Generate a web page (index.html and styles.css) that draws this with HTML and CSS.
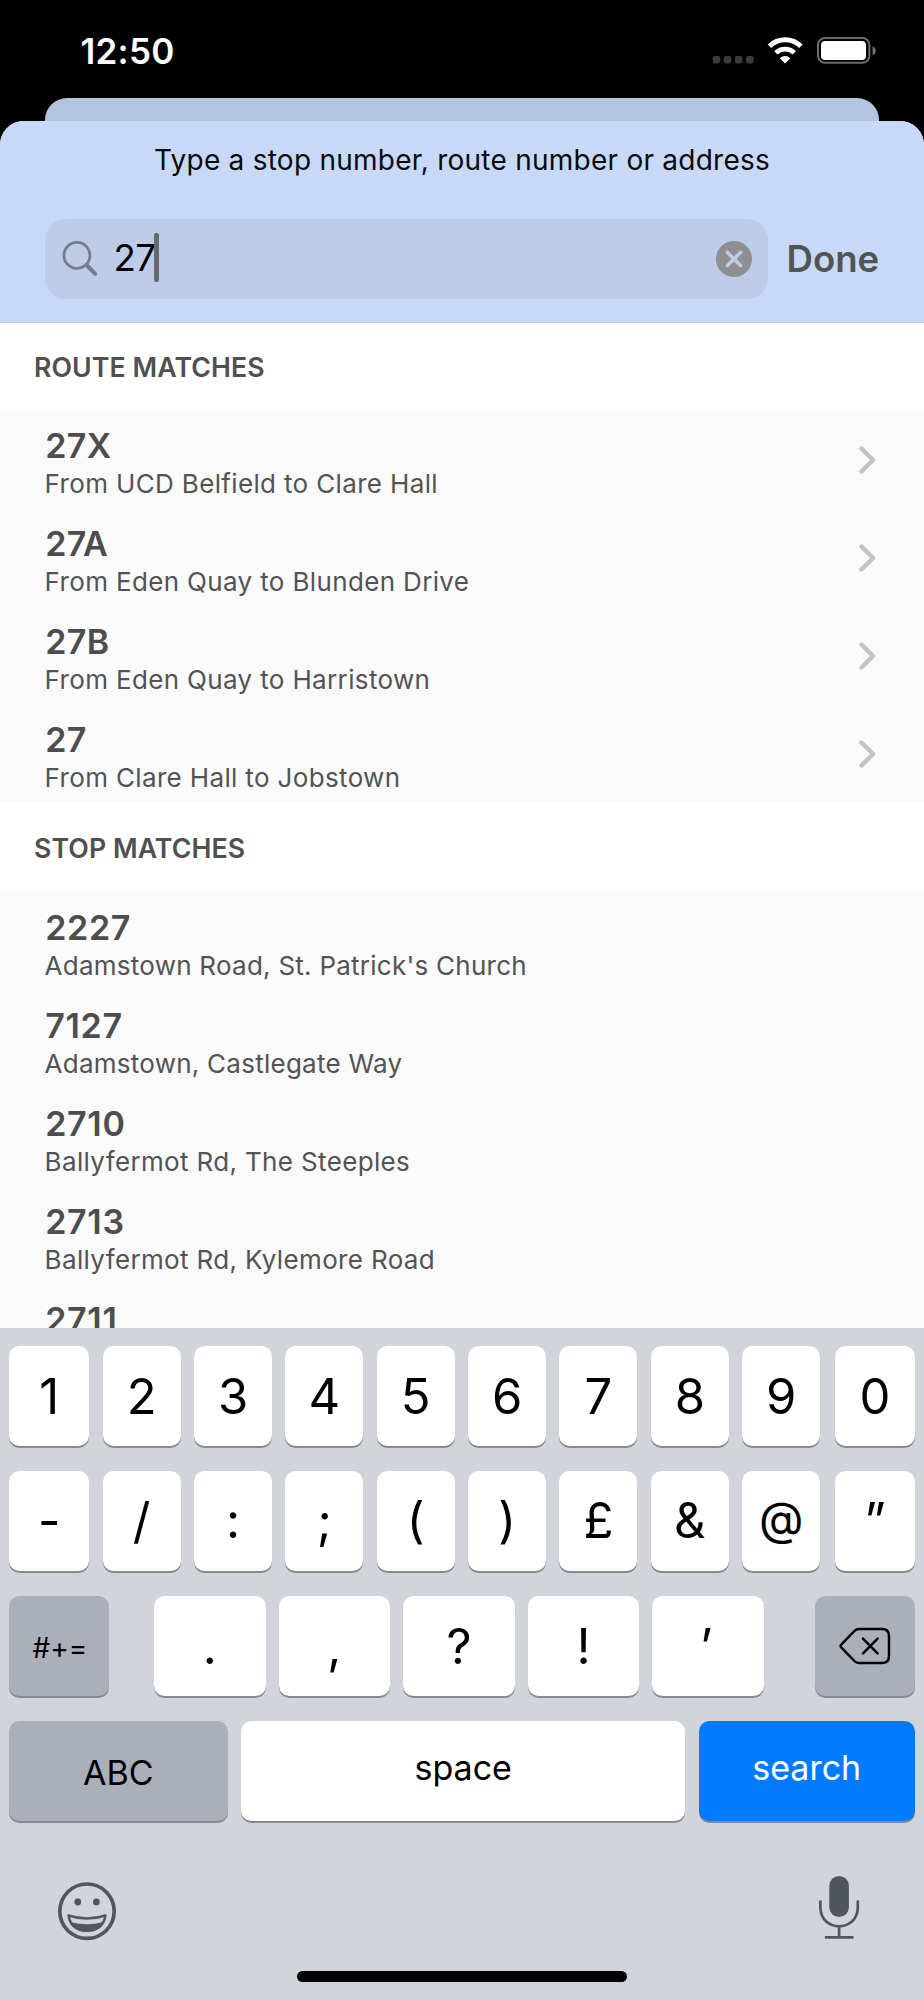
FILE: index.html
```html
<!DOCTYPE html>
<html lang="en">
<head>
<meta charset="utf-8">
<title>Search</title>
<link rel="stylesheet" href="styles.css">
</head>
<body>
<main class="phone">
  <header class="status">
    <span class="time">12:50</span>
    <svg class="status-icons" width="170" height="34" viewBox="706 34 170 34">
      <g fill="#3b3b3b">
        <rect x="712.7" y="56" width="7.6" height="7.4" rx="2.4"/><rect x="723.7" y="56" width="7.6" height="7.4" rx="2.4"/><rect x="734.8" y="56" width="7.6" height="7.4" rx="2.4"/><rect x="746" y="56" width="7.6" height="7.4" rx="2.4"/>
      </g>
      <g fill="none" stroke="#fff" stroke-width="5">
        <path d="M769.4 46.3A22.3 22.3 0 0 1 800.9 46.3"/>
        <path d="M775.9 52.9A13.2 13.2 0 0 1 794.3 52.9" stroke-width="4.8"/>
      </g>
      <path d="M785.1 63.4L779.9 58.2A7.3 7.3 0 0 1 790.3 58.2Z" fill="#fff"/>
      <rect x="818" y="38" width="51.4" height="24.8" rx="7" fill="none" stroke="#6b6b6b" stroke-width="2"/>
      <rect x="821" y="41" width="45" height="19" rx="4" fill="#fff"/>
      <path d="M872.6 46.2C876.6 47.8 876.6 53.6 872.6 55.2Z" fill="#777"/>
    </svg>
  </header>
  <div class="back-card"></div>
  <section class="sheet">
    <div class="search-header">
      <h1 class="prompt">Type a stop number, route number or address</h1>
      <div class="search-row">
        <div class="field">
          <svg width="38" height="38" viewBox="0 0 38 38"><g fill="none" stroke="#777d8b" stroke-linecap="round"><circle cx="15.9" cy="15.4" r="13" stroke-width="2.8"/><path d="M25.5 25L34.3 33.8" stroke-width="4"/></g></svg>
          <span class="query">27</span><span class="caret"></span>
          <svg class="clear" width="36" height="36" viewBox="0 0 36 36"><circle cx="18" cy="18" r="18" fill="#8e8e93"/><path d="M11.4 11.4L24.6 24.6M24.6 11.4L11.4 24.6" stroke="#becce6" stroke-width="3.6" stroke-linecap="round"/></svg>
        </div>
        <span class="done">Done</span>
      </div>
    </div>
    <div class="results">
      <h2 class="section">ROUTE MATCHES</h2>
      <ul class="list">
        <li class="row"><div><b class="num">27X</b><p class="desc">From UCD Belfield to Clare Hall</p></div><svg class="chev" width="18" height="30" viewBox="0 0 18 30"><path d="M3.5 3.5L15 15L3.5 26.5"/></svg></li>
        <li class="row"><div><b class="num">27A</b><p class="desc">From Eden Quay to Blunden Drive</p></div><svg class="chev" width="18" height="30" viewBox="0 0 18 30"><path d="M3.5 3.5L15 15L3.5 26.5"/></svg></li>
        <li class="row"><div><b class="num">27B</b><p class="desc">From Eden Quay to Harristown</p></div><svg class="chev" width="18" height="30" viewBox="0 0 18 30"><path d="M3.5 3.5L15 15L3.5 26.5"/></svg></li>
        <li class="row"><div><b class="num">27</b><p class="desc">From Clare Hall to Jobstown</p></div><svg class="chev" width="18" height="30" viewBox="0 0 18 30"><path d="M3.5 3.5L15 15L3.5 26.5"/></svg></li>
      </ul>
      <h2 class="section">STOP MATCHES</h2>
      <ul class="list stops">
        <li class="row"><div><b class="num">2227</b><p class="desc church">Adamstown Road, St. Patrick's Church</p></div></li>
        <li class="row"><div><b class="num">7127</b><p class="desc castle">Adamstown, Castlegate Way</p></div></li>
        <li class="row"><div><b class="num">2710</b><p class="desc">Ballyfermot Rd, The Steeples</p></div></li>
        <li class="row"><div><b class="num">2713</b><p class="desc">Ballyfermot Rd, Kylemore Road</p></div></li>
        <li class="row"><div><b class="num">2711</b></div></li>
      </ul>
    </div>
  </section>
  <section class="keyboard">
    <div class="keys ten"><span class="key">1</span><span class="key">2</span><span class="key">3</span><span class="key">4</span><span class="key">5</span><span class="key">6</span><span class="key">7</span><span class="key">8</span><span class="key">9</span><span class="key">0</span></div>
    <div class="keys ten sym"><span class="key">-</span><span class="key">/</span><span class="key">:</span><span class="key">;</span><span class="key">(</span><span class="key">)</span><span class="key">£</span><span class="key">&amp;</span><span class="key at">@</span><span class="key">”</span></div>
    <div class="keys third">
      <span class="key dark more">#+=</span>
      <div class="punct"><span class="key">.</span><span class="key">,</span><span class="key">?</span><span class="key">!</span><span class="key apos">’</span></div>
      <span class="key dark"><svg width="54" height="40" viewBox="0 0 54 40"><g fill="none" stroke="#000" stroke-width="2.5" stroke-linecap="round" stroke-linejoin="round"><path d="M3.2 18.6Q2 20 3.2 21.4L16.4 35Q18.2 37 21 37H44Q51 37 51 30V10Q51 3 44 3H21Q18.2 3 16.4 5Z"/><path d="M25 12.6L39.6 27.4M39.6 12.6L25 27.4"/></g></svg></span>
    </div>
    <div class="keys fourth"><span class="key dark abc">ABC</span><span class="key space">space</span><span class="key go">search</span></div>
    <div class="tools">
      <svg width="60" height="60" viewBox="57 1881 60 60"><g fill="none" stroke="#51565d"><circle cx="87" cy="1911.2" r="27.2" stroke-width="3.7"/><path d="M68.5 1915.5Q87 1921.5 105.5 1915.5Q103 1930.5 87 1930.8Q71 1930.5 68.5 1915.5Z" stroke-width="2.4" stroke-linejoin="round"/></g><g fill="#51565d"><circle cx="77.8" cy="1902" r="3.4"/><circle cx="96.4" cy="1902" r="3.4"/><path d="M70.4 1922Q87 1926.5 103.6 1922Q98.8 1931.8 87 1931.8Q75.2 1931.8 70.4 1922Z"/></g></svg>
      <svg width="44" height="66" viewBox="817 1875 44 66"><rect x="829.3" y="1876" width="19.6" height="41" rx="9.8" fill="#51565d"/><g fill="none" stroke="#51565d" stroke-width="2.7" stroke-linecap="round"><path d="M820.4 1901.5V1908Q820.8 1917 826.5 1921.8Q832 1926.3 839.1 1926.3Q846.2 1926.3 851.7 1921.8Q857.4 1917 857.8 1908V1901.5M839.1 1927V1937M826 1937.4H852.4"/></g></svg>
    </div>
    <div class="home"></div>
  </section>
</main>
</body>
</html>
```
FILE: styles.css
```css
* { box-sizing: border-box; }
body, h1, h2, p, ul { margin: 0; padding: 0; }
body { font-family: Inter, "Liberation Sans", sans-serif; background: #000; }
svg { display: block; flex: none; }
.phone { width: 924px; height: 2000px; display: flex; flex-direction: column; overflow: hidden; background: #000; }

.status { height: 98px; flex: none; display: flex; justify-content: space-between; align-items: flex-start; padding: 34px 48px 0 80.5px; }
.time { font-size: 35px; font-weight: 600; line-height: 34px; letter-spacing: .25px; color: #fff; }

.back-card { height: 48px; flex: none; margin: 0 45px -25.5px; background: #b3c4de; border-radius: 22px 22px 0 0; }
.sheet { height: 1207.5px; flex: none; background: #fff; border-radius: 24px 24px 0 0; overflow: hidden; }
.search-header { height: 202px; background: #c8d9f7; border-bottom: 1.5px solid #c6cbd6; padding: 19.5px 45px 0; }
.prompt { font-size: 28px; font-weight: 400; line-height: 40px; letter-spacing: .245px; text-align: center; color: #090a0c; }
.search-row { display: flex; gap: 19px; align-items: center; margin-top: 39px; }
.field { width: 722.5px; height: 80px; flex: none; border-radius: 21px; background: #bdcce7; display: flex; align-items: center; padding: 0 15.5px; }
.query { font-size: 36.6px; line-height: 79px; height: 80px; letter-spacing: -.6px; margin-left: 15px; width: 41px; white-space: nowrap; }
.caret { width: 4.6px; height: 49px; border-radius: 2px; background: #68696d; margin: -4px auto 0 -.5px; }
.done { font-size: 36.6px; font-weight: 600; line-height: 80px; color: #535353; }

.section { height: 89.3px; padding: 0 34px; font-size: 26.7px; font-weight: 600; line-height: 91px; letter-spacing: .08px; color: #505050; background: #fff; }
.section:first-child { height: 88px; line-height: 88px; }
.list { list-style: none; background: #fafafa; }
.row { height: 98.15px; display: flex; justify-content: space-between; align-items: flex-start; padding: 15.5px 48px 0 44.6px; }
.num { display: block; font-size: 34px; font-weight: 600; line-height: 40px; letter-spacing: .4px; color: #4d4d4d; padding-left: .6px; }
.stops .num { font-kerning: none; letter-spacing: .7px; }
.desc { font-size: 26px; line-height: 36px; letter-spacing: .35px; color: #535353; white-space: nowrap; }
.desc.church { letter-spacing: .25px; }
.desc.castle { letter-spacing: .25px; }
.chev { margin-top: 18.5px; fill: none; stroke: #c3c3c5; stroke-width: 4.4; stroke-linecap: round; stroke-linejoin: round; }

.keyboard { height: 672px; flex: none; background: #d1d4da; padding: 18px 9.3px 0 9px; display: flex; flex-direction: column; gap: 25px; position: relative; }
.keys { display: flex; height: 100px; flex: none; }
.key { display: flex; justify-content: center; align-items: center; height: 100px; border-radius: 10.5px; background: #fff; box-shadow: 0 2px 0 #88898d; font-size: 49px; line-height: 100px; color: #000; }
.ten { gap: 13.37px; }
.ten .key { width: 78px; padding-top: 1px; }
.ten .key:first-child { width: 80.3px; }
.ten .key:last-child { width: 79.3px; margin-left: auto; }
.sym .key { padding: 0 0 1px; }
.sym .key.at { font-size: 46px; padding-bottom: 6px; }
.third > .dark { width: 100px; }
.punct { display: flex; gap: 13.1px; margin: 0 auto 0 45px; }
.punct .key { width: 111.5px; padding-top: 1px; }
.punct .apos { padding-right: 4px; }
.key.dark { background: #abafba; }
.key.more { font-size: 28px; padding: 4px 0 0 2px; }
.fourth { gap: 13.4px; }
.key.abc { width: 218.7px; font-size: 34px; padding-top: 4px; }
.key.space { flex: 1; font-size: 34px; padding-bottom: 6px; }
.key.go { width: 216px; font-size: 34px; padding-bottom: 6px; background: #007aff; color: #fff; }
.tools { display: flex; justify-content: space-between; align-items: flex-end; height: 95px; padding: 0 53.7px 0 48px; }
.home { width: 330px; height: 11px; border-radius: 6px; background: #000; position: absolute; left: 297px; top: 643px; }
```
